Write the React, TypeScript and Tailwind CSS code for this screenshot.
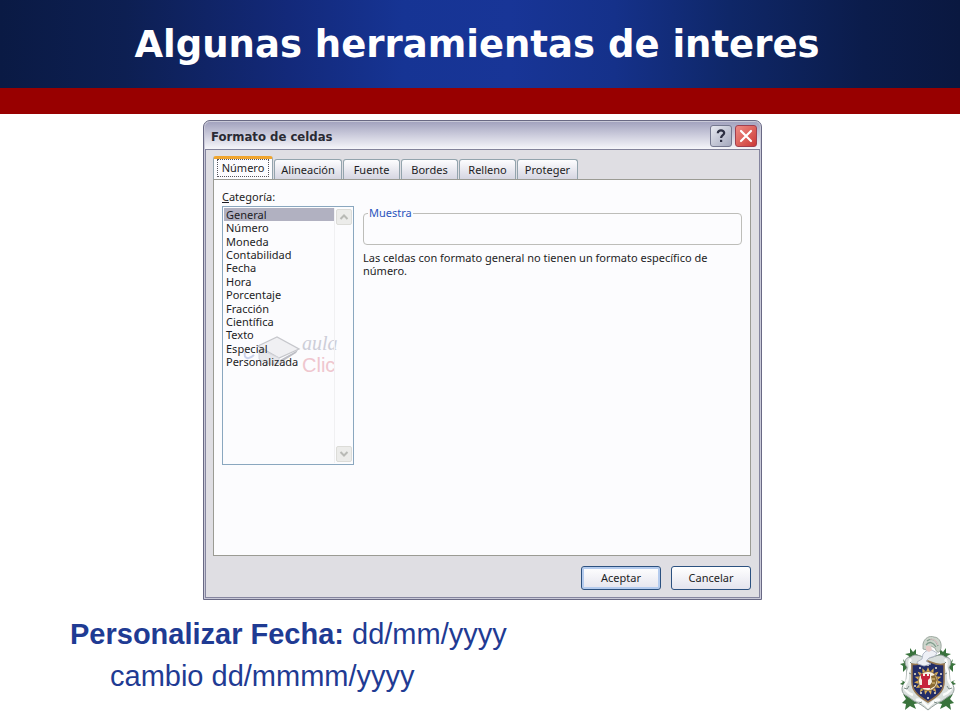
import { useState } from "react";
import clsx from "clsx";

const TABS = [
    { name: "Número", width: "w-[60px]" },
    { name: "Alineación", width: "w-[68px]" },
    { name: "Fuente", width: "w-[57px]" },
    { name: "Bordes", width: "w-[57px]" },
    { name: "Relleno", width: "w-[57px]" },
    { name: "Proteger", width: "w-[61px]" },
];

const CATEGORIES = [
    "General",
    "Número",
    "Moneda",
    "Contabilidad",
    "Fecha",
    "Hora",
    "Porcentaje",
    "Fracción",
    "Científica",
    "Texto",
    "Especial",
    "Personalizada",
];

const SUN_RAYS = [0, 24, 48, 72, 96, 120, 144, 168, 192, 216, 240, 264, 288, 312, 336];

const SlideHeader = () => (
    <header>
        <div className="flex h-[88px] items-center justify-center bg-[linear-gradient(90deg,#0a1a44_0%,#0d1f52_13%,#13297a_30%,#163494_42%,#183597_53%,#15318a_64%,#0f2768_76%,#0b1c4b_90%,#0a1840_100%)]">
            <h1 className="pt-[2px] pr-[6px] font-['DejaVu_Sans',sans-serif] text-[37px] leading-[44px] font-bold text-white">
                Algunas herramientas de interes
            </h1>
        </div>
        <div className="h-[26px] bg-[#980000]" />
    </header>
);

const TitleBar = () => (
    <div className="flex h-[28px] items-center rounded-t-[5px] border-b border-[#82829a] bg-linear-to-b from-[#a3a3bf] via-[#cdcddd] to-[#f6f6fa] pr-[3px] pl-[6px]">
        <h2 className="flex-1 pt-[2px] font-['DejaVu_Sans_Condensed','DejaVu_Sans',sans-serif] text-[13px] leading-4 font-bold text-[#2a2a34]">
            Formato de celdas
        </h2>
        <div className="flex gap-[3px]">
            <button
                aria-label="Ayuda"
                className="flex size-[22px] items-center justify-center rounded-[3px] border border-[#75788f] bg-linear-to-br from-[#e9eaf1] to-[#a4a8bd]"
            >
                <svg viewBox="0 0 12 14" className="h-[14px] w-3" fill="none" stroke="#2d2f42" strokeWidth="2.2">
                    <path d="M2.8 4.3C2.8 2.4 4.2 1.3 6 1.3S9.2 2.4 9.2 4.1C9.2 6.2 6.1 6.3 6.1 9" />
                    <path d="M6.1 10.8V13" />
                </svg>
            </button>
            <button
                aria-label="Cerrar"
                className="flex size-[22px] items-center justify-center rounded-[3px] border border-[#a04050] bg-linear-to-br from-[#ee8a84] to-[#cb3636]"
            >
                <svg viewBox="0 0 14 14" className="size-[14px]" stroke="#fff" strokeWidth="2.2" strokeLinecap="round">
                    <path d="M2 2L12 12M12 2L2 12" />
                </svg>
            </button>
        </div>
    </div>
);

interface ScrollButtonProps {
    label: string;
    down?: boolean;
}

const ScrollButton = ({ label, down }: ScrollButtonProps) => (
    <button
        aria-label={label}
        className="flex size-4 items-center justify-center rounded-[2px] border border-[#dcdcd8] bg-[#ececea]"
    >
        <svg viewBox="0 0 10 10" className="size-[10px]" fill="none" stroke="#b9bab6" strokeWidth="2">
            <path d={down ? "M1.5 3L5 6.5L8.5 3" : "M1.5 7L5 3.5L8.5 7"} />
        </svg>
    </button>
);

const Watermark = () => (
    <div className="absolute top-[126px] left-5 flex items-start" aria-hidden="true">
        <svg viewBox="0 0 58 36" className="h-9 w-[58px]">
            <path d="M15 13L34 4L56 16L36 25Z" fill="#f0f0f3" stroke="#c6c7cc" strokeWidth="1.3" />
            <path d="M16 16V26C22 31 30 33 36 30V25Z" fill="#e6e7eb" stroke="#d6d7dd" />
            <path d="M55 17L37 27V30L53 20Z" fill="#bcbdc4" />
            <path d="M2 19C0 26 6 27 11 22" fill="none" stroke="#c9d2ee" strokeWidth="2" />
        </svg>
        <div className="pl-px">
            <p className="font-['Liberation_Serif',serif] text-[20px] leading-5 text-[#cdced8] italic">aula</p>
            <p className="font-['Liberation_Sans',sans-serif] text-[20px] leading-6 text-[#efc6ce]">Clic</p>
        </div>
    </div>
);

interface CategoryListProps {
    selected: string;
    onSelect: (value: string) => void;
}

const CategoryList = ({ selected, onSelect }: CategoryListProps) => (
    <fieldset className="w-[132px]">
        <legend className="leading-4">
            <span className="underline">C</span>ategoría:
        </legend>
        <div className="relative mt-px flex h-[259px] border border-[#8aa7bf] bg-[#fcfcfe] p-px">
            <Watermark />
            <div className="relative grid h-[161px] flex-1 auto-rows-fr">
                {CATEGORIES.map((name) => (
                    <label
                        key={name}
                        className={clsx("flex items-center pl-[2px] leading-3", selected === name && "bg-[#b1b1c1]")}
                    >
                        <input
                            type="radio"
                            name="categoria"
                            className="sr-only"
                            checked={selected === name}
                            onChange={() => onSelect(name)}
                        />
                        {name}
                    </label>
                ))}
            </div>
            <div className="relative flex w-[18px] flex-col items-center justify-between border-l border-[#f0f0f2] py-px">
                <ScrollButton label="Subir" />
                <ScrollButton label="Bajar" down />
            </div>
        </div>
    </fieldset>
);

const DialogButton = ({ text, primary }: { text: string; primary?: boolean }) => (
    <button
        className={clsx(
            "h-6 w-20 rounded-[3px] border border-[#2c5180] bg-linear-to-b from-white to-[#e4e4ee] leading-4",
            primary && "shadow-[inset_0_0_0_2px_#b4cbee]"
        )}
    >
        {text}
    </button>
);

const CellFormatDialog = () => {
    const [tab, setTab] = useState("Número");
    const [category, setCategory] = useState("General");

    return (
        <section className="w-full max-w-[559px] rounded-t-[7px] border border-[#696984] bg-[#c9c9d8] p-px font-['Noto_Sans',sans-serif] text-[11px] text-[#1d1d24]">
            <TitleBar />
            <div className="border-x border-b border-[#85859f] bg-[#dfdee3] pt-[6px] pr-2 pb-[7px] pl-[7px]">
                <div role="tablist" className="flex h-[23px] items-end gap-px">
                    {TABS.map(({ name, width }) => (
                        <button
                            key={name}
                            role="tab"
                            aria-selected={tab === name}
                            onClick={() => setTab(name)}
                            className={clsx(
                                "rounded-t-[3px] border border-b-0 border-[#93a4ad] leading-4",
                                width,
                                tab === name
                                    ? "h-[23px] border-t-[3px] border-t-[#f0a52e] bg-[#fcfcfe] px-[3px] pb-[2px]"
                                    : "h-5 bg-linear-to-b from-[#fdfdfe] to-[#d6d6e2]"
                            )}
                        >
                            <span className={clsx("block", tab === name && "border border-dotted border-[#55555c]")}>
                                {name}
                            </span>
                        </button>
                    ))}
                </div>
                <div className="flex h-[377px] gap-[9px] border border-[#9b9b94] bg-[#fcfcfe] px-2 pt-[9px]">
                    <CategoryList selected={category} onSelect={setCategory} />
                    <div className="flex-1 pt-4">
                        <fieldset className="h-10 rounded-[4px] border border-[#bdbdb9] px-1">
                            <legend className="px-px leading-4 text-[#2b55bd]">Muestra</legend>
                        </fieldset>
                        <p className="pt-[6px] leading-[13px]">
                            Las celdas con formato general no tienen un formato específico de número.
                        </p>
                    </div>
                </div>
                <div className="flex justify-end gap-[10px] pt-[10px]">
                    <DialogButton text="Aceptar" primary />
                    <DialogButton text="Cancelar" />
                </div>
            </div>
        </section>
    );
};

const Crest = () => (
    <svg viewBox="0 0 58 76" className="h-[76px] w-[58px]" role="img" aria-label="Escudo">
        {/* laurel leaves behind the frame */}
        <g fill="#39733c">
            <path d="M10 12l3 4 3-3 0 5 5 2-5 1 0 4-4-3-5 3 2-5-4-2 5-1zM46 12l-3 4-3-3 0 5-5 2 5 1 0 4 4-3 5 3-2-5 4-2-5-1z" />
            <path d="M3 23l3 4 4-3-1 5 3 3-5 0-4 4 0-6-3-2 4-1zM53 23l-3 4-4-3 1 5-3 3 5 0 4 4 0-6 3-2-4-1z" />
            <path d="M1 44l4 2 3-3 1 5 3 4-5-1-4 4 0-6-3-1 3-2zM55 44l-4 2-3-3-1 5-3 4 5-1 4 4 0-6 3-1-3-2z" />
            <path d="M3 58l5 2 4-3 1 6 6 4-5 1 2 5-6-3-5 4 1-6-4-1 4-4zM53 58l-5 2-4-3-1 6-6 4 5 1-2 5 6-3 5 4-1-6 4-1-4-4z" />
        </g>
        {/* silver scrollwork */}
        <path
            d="M11 21C16 16 22 22 28 22S40 16 45 21C52 21 52 28 49 31L50 46C56 50 55 58 49 60L42 65C37 67 33 70 28 74C23 70 19 67 14 65L7 60C1 58 0 50 6 46L7 31C4 28 4 21 11 21Z"
            fill="#d9dfdd"
            stroke="#95a09d"
        />
        <path
            d="M11 23C7 27 12 30 9 34S10 42 6 47S7 57 13 59M45 23C49 27 44 30 47 34S46 42 50 47S49 57 43 59M16 64C20 62 24 67 28 71C32 67 36 62 40 64"
            fill="none"
            stroke="#fbfcfb"
            strokeWidth="2.5"
        />
        <path
            d="M10 26l2 2M9 37l2 1M4 52l3 1 2-3M46 26l-2 2M47 37l-2 1M52 52l-3 1-2-3M19 67l3-1M37 67l-3-1"
            fill="none"
            stroke="#7b8c86"
        />
        {/* shield */}
        <path
            d="M12 28C18 30 23 27 28 25C33 27 38 30 44 28V46C44 56 36 61 28 66C20 61 12 56 12 46Z"
            fill="#232d68"
            stroke="#94754f"
            strokeWidth="1.6"
        />
        <g fill="#f2e8cf">
            <circle cx="20" cy="32" r="1" />
            <circle cx="28" cy="29" r="1" />
            <circle cx="36" cy="32" r="1" />
            <circle cx="15" cy="38" r="1" />
            <circle cx="41" cy="38" r="1" />
            <circle cx="15" cy="50" r="1" />
            <circle cx="41" cy="50" r="1" />
            <circle cx="21" cy="57" r="1" />
            <circle cx="35" cy="57" r="1" />
            <circle cx="28" cy="62" r="1" />
        </g>
        {SUN_RAYS.map((angle) => (
            <path key={angle} d="M26.4 35L28 31L29.6 35Z" fill="#d7ac55" transform={`rotate(${angle} 28 45)`} />
        ))}
        <circle cx="28" cy="45" r="9.6" fill="#f6f0e6" stroke="#b08b45" />
        <path d="M21 38h2v2h2v-2h2v2h2v-2h1v4l-2 2v5h2v3H20v-3h2v-5l-1-2z" fill="#c6243c" />
        <path d="M31 40l4-1 2 5-2 6-5 3v-4l2-3z" fill="#8a6a32" />
        <path d="M32 43h3M32 47h3" stroke="#e9cf86" />
        {/* helmeted figure on top */}
        <path
            d="M26 15L32 14L37 17L35 20L29 22L26 25L31 28L24 30L18 28L17 26L22 23L23 18Z"
            fill="#eef0f6"
            stroke="#a7aebf"
            strokeWidth="0.8"
        />
        <path d="M23 8C24 2 30 -1 34 1C40 1 43 9 40 15C38 18 36 15 35 12L31 10L27 14L23 13Z" fill="#ccd4cb" stroke="#8e9b92" strokeWidth="0.8" />
        <path d="M27 5C31 2 36 3 38 10M26 9C29 5 33 6 36 11" fill="none" stroke="#7f9c8b" strokeWidth="1.3" />
        <path d="M30 3C34 3 37 6 38 9" fill="none" stroke="#e2c5c8" strokeWidth="1.2" />
        <path d="M26 10l5 0 1 4-3 2-3-2z" fill="#e8c9c5" />
    </svg>
);

export default function App() {
    return (
        <div className="min-h-screen bg-white">
            <SlideHeader />
            <main className="flex justify-center pt-[6px] pl-[5px]">
                <CellFormatDialog />
            </main>
            <footer className="flex items-start justify-between pr-[2px] pl-[70px] font-['Liberation_Sans',Arial,sans-serif] text-[29px] leading-[42px] text-[#1f3b93]">
                <div className="pt-[13px]">
                    <p>
                        <strong>Personalizar Fecha:</strong> dd/mm/yyyy
                    </p>
                    <p className="pl-10">cambio dd/mmmm/yyyy</p>
                </div>
                <div className="pt-9">
                    <Crest />
                </div>
            </footer>
        </div>
    );
}
